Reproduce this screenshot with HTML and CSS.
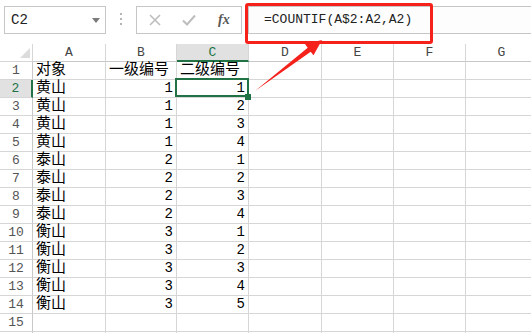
FILE: index.html
```html
<!DOCTYPE html>
<html lang="zh-CN">

<head>
    <meta charset="UTF-8">
    <title>COUNTIF</title>
    <link rel="stylesheet" href="styles.css">
</head>

<body>
    <div class="toolbar">
        <div class="name-box"><span>C2</span><span class="caret"></span></div>
        <div class="grip"><span></span><span></span><span></span></div>
        <div class="fx-buttons">
            <span class="slot">
                <svg width="12" height="12" viewBox="0 0 12 12"><path d="M1 1 L11 11 M11 1 L1 11" stroke="#bdbdbd" stroke-width="1.6" fill="none"/></svg>
            </span>
            <span class="slot">
                <svg width="14" height="12" viewBox="0 0 14 12"><path d="M1 6.5 L5 10.5 L13 1.5" stroke="#bdbdbd" stroke-width="2" fill="none"/></svg>
            </span>
            <span class="slot fx">fx</span>
        </div>
        <div class="formula">=COUNTIF(A$2:A2,A2)</div>
    </div>

    <div class="sheet">
        <div class="corner"><span class="tri"></span></div>
        <div class="col-head">A</div>
        <div class="col-head">B</div>
        <div class="col-head sel-col">C</div>
        <div class="col-head">D</div>
        <div class="col-head">E</div>
        <div class="col-head">F</div>
        <div class="col-head">G</div>

        <div class="row-head">1</div><div>对象</div><div>一级编号</div><div>二级编号</div><div></div><div></div><div></div><div></div>
        <div class="row-head sel-row">2</div><div>黄山</div><div class="num">1</div><div class="num active">1</div><div></div><div></div><div></div><div></div>
        <div class="row-head">3</div><div>黄山</div><div class="num">1</div><div class="num">2</div><div></div><div></div><div></div><div></div>
        <div class="row-head">4</div><div>黄山</div><div class="num">1</div><div class="num">3</div><div></div><div></div><div></div><div></div>
        <div class="row-head">5</div><div>黄山</div><div class="num">1</div><div class="num">4</div><div></div><div></div><div></div><div></div>
        <div class="row-head">6</div><div>泰山</div><div class="num">2</div><div class="num">1</div><div></div><div></div><div></div><div></div>
        <div class="row-head">7</div><div>泰山</div><div class="num">2</div><div class="num">2</div><div></div><div></div><div></div><div></div>
        <div class="row-head">8</div><div>泰山</div><div class="num">2</div><div class="num">3</div><div></div><div></div><div></div><div></div>
        <div class="row-head">9</div><div>泰山</div><div class="num">2</div><div class="num">4</div><div></div><div></div><div></div><div></div>
        <div class="row-head">10</div><div>衡山</div><div class="num">3</div><div class="num">1</div><div></div><div></div><div></div><div></div>
        <div class="row-head">11</div><div>衡山</div><div class="num">3</div><div class="num">2</div><div></div><div></div><div></div><div></div>
        <div class="row-head">12</div><div>衡山</div><div class="num">3</div><div class="num">3</div><div></div><div></div><div></div><div></div>
        <div class="row-head">13</div><div>衡山</div><div class="num">3</div><div class="num">4</div><div></div><div></div><div></div><div></div>
        <div class="row-head">14</div><div>衡山</div><div class="num">3</div><div class="num">5</div><div></div><div></div><div></div><div></div>
        <div class="row-head">15</div><div></div><div></div><div></div><div></div><div></div><div></div><div></div>
        <div class="row-head"></div><div></div><div></div><div></div><div></div><div></div><div></div><div></div>
    </div>

    <!-- annotation drawn over the screenshot -->
    <div class="callout"></div>
    <svg class="arrow" width="531" height="333" viewBox="0 0 531 333">
        <polygon points="255,91 310.7,51.7 313.5,55.3 322,40 305,44.1 307.7,47.7" fill="#f5211b"/>
    </svg>
</body>

</html>
```

FILE: styles.css
```css
/* Reset */
* {
    margin: 0;
    padding: 0;
    box-sizing: border-box;
}

body {
    width: 531px;
    height: 333px;
    overflow: hidden;
    position: relative;
    background-color: #fff;
    color: #000;
    font-family: "Liberation Mono", "Noto Sans CJK SC", monospace;
}

/* Formula bar */
.toolbar {
    display: flex;
    align-items: flex-start;
    height: 44px;
    padding: 6px 0 0 4px;
}

.name-box {
    width: 102px;
    height: 28px;
    border: 1px solid #c6c6c6;
    display: flex;
    align-items: center;
    justify-content: space-between;
    padding: 0 5px 0 6px;
    font-size: 14px;
    color: #222;
}

.caret {
    border-left: 4px solid transparent;
    border-right: 4px solid transparent;
    border-top: 5px solid #7a7a7a;
}

.grip {
    display: flex;
    flex-direction: column;
    gap: 3px;
    margin: 7px 14px 0 14px;
}

.grip span {
    width: 2px;
    height: 2px;
    background-color: #b5b5b5;
}

.fx-buttons {
    width: 106px;
    height: 28px;
    border: 1px solid #c6c6c6;
    display: flex;
    align-items: center;
    padding-left: 1px;
}

.slot {
    width: 36px;
    display: flex;
    justify-content: center;
    align-items: center;
}

.fx {
    font-family: "Liberation Serif", serif;
    font-style: italic;
    font-weight: bold;
    font-size: 14px;
    color: #595959;
}

.formula {
    flex: 1;
    height: 28px;
    margin: 0 -10px 0 6px;
    border: 1px solid #c6c6c6;
    padding-left: 15px;
    font-size: 13px;
    line-height: 26px;
    color: #222;
    background-color: #fdfdfd;
}

/* Worksheet grid */
.sheet {
    display: grid;
    grid-template-columns: 33px 73px 71px 72px 73px 72px 72px 72px;
    grid-auto-rows: 18px;
}

.sheet > div {
    border-right: 1px solid #d6d6d6;
    border-bottom: 1px solid #d6d6d6;
    padding: 0 3px;
    font-size: 15px;
    line-height: 17px;
    white-space: nowrap;
}

.sheet > .corner {
    display: flex;
    align-items: flex-end;
    justify-content: flex-end;
    padding: 0 2px 3px 0;
}

.tri {
    border-left: 10px solid transparent;
    border-bottom: 10px solid #dcdcdc;
}

.sheet > .col-head {
    text-align: center;
    font-size: 13px;
    color: #444;
    border-bottom-color: #c8c8c8;
}

.sheet > .row-head {
    text-align: center;
    font-size: 13px;
    color: #555;
    border-right-color: #c8c8c8;
}

.sheet > .num {
    text-align: right;
    font-size: 14px;
}

.sheet > .sel-col {
    background-color: #e1e1e1;
    color: #217346;
    border-bottom: 2px solid #217346;
}

.sheet > .sel-row {
    background-color: #e1e1e1;
    color: #217346;
    border-right: 2px solid #217346;
}

/* Active cell outline and fill handle */
.active {
    position: relative;
}

.active::after {
    content: "";
    position: absolute;
    left: -2px;
    top: -2px;
    right: -1px;
    bottom: 0;
    border: 2px solid #217346;
}

.active::before {
    content: "";
    position: absolute;
    right: -3px;
    bottom: -3px;
    width: 6px;
    height: 6px;
    background-color: #217346;
    z-index: 1;
}

/* Red annotation */
.callout {
    position: absolute;
    left: 245px;
    top: 3px;
    width: 188px;
    height: 41px;
    border: 3px solid #f5211b;
    border-radius: 3px;
}

.arrow {
    position: absolute;
    left: 0;
    top: 0;
    pointer-events: none;
}
```
